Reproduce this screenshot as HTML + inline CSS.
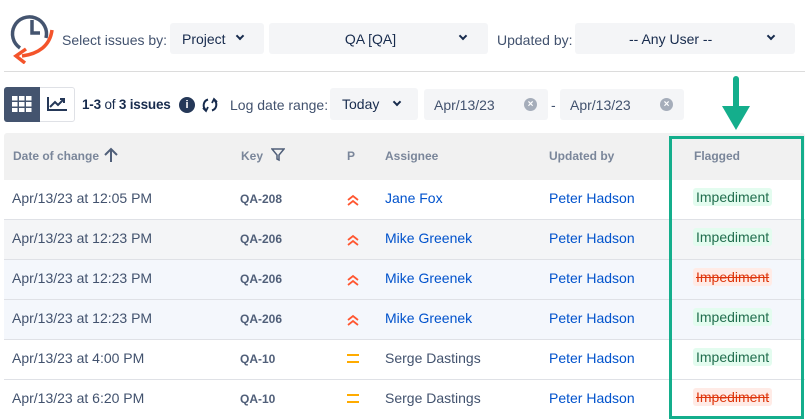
<!DOCTYPE html>
<html><head><meta charset="utf-8"><style>
*{box-sizing:border-box;margin:0;padding:0}
body{width:805px;height:419px;background:#fff;font-family:"Liberation Sans",sans-serif;position:relative;overflow:hidden;color:#42526e}
.a{position:absolute}
.box{position:absolute;background:#f4f5f7;border-radius:3px;font-size:14px;color:#172b4d;display:flex;align-items:center}
.chev{position:absolute;width:6px;height:6px;border-right:2px solid #172b4d;border-bottom:2px solid #172b4d;transform:rotate(45deg)}
.lbl{position:absolute;font-size:14px;color:#42526e}
.row{position:absolute;left:4px;width:801px;height:40px;border-bottom:1px solid #dfe1e6;font-size:14px}
.row span{position:absolute;top:10px}
.k{font-weight:bold;font-size:12px;color:#505f79;top:12px!important}
.blue{color:#0052cc}
.tag{padding:1px 3px;border-radius:3px;font-size:14px}
.g{background:#e3fcef;color:#216e4e}
.r{background:#ffebe6;color:#de350b;text-decoration:line-through}
.h{position:absolute;top:149px;font-size:12px;font-weight:bold;color:#7a869a}
.x{position:absolute;width:13px;height:13px;border-radius:50%;background:#a5adba;color:#fff;font-size:10px;line-height:13px;text-align:center;font-weight:bold}
.pr{position:absolute;left:342px;top:14px}
</style></head><body>
<svg class="a" style="left:6px;top:12px" width="48" height="52" viewBox="0 0 48 52">
<path d="M14 36 A17 17 0 1 1 40 26" fill="none" stroke="#44546f" stroke-width="3.5"/>
<path d="M26 8 V21 H34" fill="none" stroke="#44546f" stroke-width="3.5"/>
<path d="M46 18 C44 34 32 42 16 44" fill="none" stroke="#f4542b" stroke-width="3.5"/>
<path d="M20 37 L10 44 L19 51" fill="none" stroke="#f4542b" stroke-width="3.5"/>
</svg>
<div class="lbl" style="left:62px;top:32px">Select issues by:</div>
<div class="box" style="left:170px;top:23px;width:94px;height:31px;padding-left:12px">Project<i class="chev" style="left:67px;top:10px"></i></div>
<div class="box" style="left:269px;top:23px;width:219px;height:31px;justify-content:center;padding-right:16px">QA [QA]<i class="chev" style="left:191px;top:10px"></i></div>
<div class="lbl" style="left:497px;top:32px">Updated by:</div>
<div class="box" style="left:575px;top:23px;width:220px;height:31px;padding-left:54px">-- Any User --<i class="chev" style="left:193px;top:10px"></i></div>
<div class="a" style="left:4px;top:71px;width:801px;height:1px;background:#dcdcdc"></div>
<div class="a" style="left:4px;top:87px;width:71px;height:35px;border:1px solid #dfe1e6;border-radius:3px"></div>
<div class="a" style="left:4px;top:87px;width:36px;height:35px;background:#44546f;border-radius:3px 0 0 3px"></div>
<svg class="a" style="left:12px;top:96px" width="20" height="16"><g fill="#fff"><rect x="0" y="0" width="5.5" height="4.5"/><rect x="7" y="0" width="5.5" height="4.5"/><rect x="14" y="0" width="5.5" height="4.5"/><rect x="0" y="6" width="5.5" height="4.5"/><rect x="7" y="6" width="5.5" height="4.5"/><rect x="14" y="6" width="5.5" height="4.5"/><rect x="0" y="12" width="5.5" height="4"/><rect x="7" y="12" width="5.5" height="4"/><rect x="14" y="12" width="5.5" height="4"/></g></svg>
<svg class="a" style="left:46px;top:96px" width="22" height="16"><path d="M2 1 V14 H21 M4 11 L9 6 L12 9 L18 3 M14 3 H18 V7" fill="none" stroke="#253858" stroke-width="2"/></svg>
<div class="lbl" style="left:82px;top:97px;color:#172b4d;font-size:13.5px;letter-spacing:-0.2px"><b>1-3</b> of <b>3 issues</b></div>
<div class="a" style="left:179px;top:97px;width:16px;height:16px;border-radius:50%;background:#253858;color:#fff;font-size:11px;font-weight:bold;text-align:center;line-height:16px">i</div>
<svg class="a" style="left:202px;top:97px" width="16" height="16" viewBox="0 0 16 16"><path d="M6 2.5 A6 6 0 0 0 4 13 M10 13.5 A6 6 0 0 0 12 3" fill="none" stroke="#172b4d" stroke-width="2"/><path d="M1 11 L4 14 L6 10 M15 5 L12 2 L10 6" fill="none" stroke="#172b4d" stroke-width="1.8"/></svg>
<div class="lbl" style="left:230px;top:97px">Log date range:</div>
<div class="box" style="left:330px;top:88px;width:88px;height:32px;padding-left:12px">Today<i class="chev" style="left:64px;top:11px"></i></div>
<div class="box" style="left:424px;top:89px;width:124px;height:31px;padding-left:10px;color:#42526e">Apr/13/23<span class="x" style="left:100px;top:9px">×</span></div>
<div class="lbl" style="left:551px;top:97px">-</div>
<div class="box" style="left:560px;top:89px;width:124px;height:31px;padding-left:10px;color:#42526e">Apr/13/23<span class="x" style="left:100px;top:9px">×</span></div>
<div class="a" style="left:4px;top:133px;width:801px;height:47px;background:#f1f1f1;border-radius:3px 3px 0 0"></div>
<div class="h" style="left:13px">Date of change</div>
<svg class="a" style="left:104px;top:147px" width="14" height="16"><path d="M7 15 V2 M1 8 L7 2 L13 8" fill="none" stroke="#505f79" stroke-width="2"/></svg>
<div class="h" style="left:241px">Key</div>
<svg class="a" style="left:271px;top:148px" width="14" height="14"><path d="M1 1 H13 L8 7 V12 L6 11 V7 Z" fill="none" stroke="#505f79" stroke-width="1.5"/></svg>
<div class="h" style="left:347px">P</div>
<div class="h" style="left:385px">Assignee</div>
<div class="h" style="left:549px">Updated by</div>
<div class="h" style="left:694px">Flagged</div>

<div class="row" style="top:180px;background:#fff"><span style="left:8px">Apr/13/23 at 12:05 PM</span><span class="k" style="left:236px">QA-208</span><svg class="pr" width="14" height="12"><path d="M2 6 L7 2 L12 6 M2 11 L7 7 L12 11" fill="none" stroke="#ff5630" stroke-width="1.8"/></svg><span class="blue" style="left:381px">Jane Fox</span><span class="blue" style="left:545px">Peter Hadson</span><span class="tag g" style="left:689px;top:8px">Impediment</span></div>
<div class="row" style="top:220px;background:#f4f5f7"><span style="left:8px">Apr/13/23 at 12:23 PM</span><span class="k" style="left:236px">QA-206</span><svg class="pr" width="14" height="12"><path d="M2 6 L7 2 L12 6 M2 11 L7 7 L12 11" fill="none" stroke="#ff5630" stroke-width="1.8"/></svg><span class="blue" style="left:381px">Mike Greenek</span><span class="blue" style="left:545px">Peter Hadson</span><span class="tag g" style="left:689px;top:8px">Impediment</span></div>
<div class="row" style="top:260px;background:#f4f7fc"><span style="left:8px">Apr/13/23 at 12:23 PM</span><span class="k" style="left:236px">QA-206</span><svg class="pr" width="14" height="12"><path d="M2 6 L7 2 L12 6 M2 11 L7 7 L12 11" fill="none" stroke="#ff5630" stroke-width="1.8"/></svg><span class="blue" style="left:381px">Mike Greenek</span><span class="blue" style="left:545px">Peter Hadson</span><span class="tag r" style="left:689px;top:8px">Impediment</span></div>
<div class="row" style="top:300px;background:#f4f7fc"><span style="left:8px">Apr/13/23 at 12:23 PM</span><span class="k" style="left:236px">QA-206</span><svg class="pr" width="14" height="12"><path d="M2 6 L7 2 L12 6 M2 11 L7 7 L12 11" fill="none" stroke="#ff5630" stroke-width="1.8"/></svg><span class="blue" style="left:381px">Mike Greenek</span><span class="blue" style="left:545px">Peter Hadson</span><span class="tag g" style="left:689px;top:8px">Impediment</span></div>
<div class="row" style="top:340px;background:#fff"><span style="left:8px">Apr/13/23 at 4:00 PM</span><span class="k" style="left:236px">QA-10</span><span style="left:343px;top:14px;width:12px;height:9px;border-top:2px solid #ffab00;border-bottom:2px solid #ffab00"></span><span style="left:381px">Serge Dastings</span><span class="blue" style="left:545px">Peter Hadson</span><span class="tag g" style="left:689px;top:8px">Impediment</span></div>
<div class="row" style="top:380px;background:#fff;border:none"><span style="left:8px">Apr/13/23 at 6:20 PM</span><span class="k" style="left:236px">QA-10</span><span style="left:343px;top:14px;width:12px;height:9px;border-top:2px solid #ffab00;border-bottom:2px solid #ffab00"></span><span style="left:381px">Serge Dastings</span><span class="blue" style="left:545px">Peter Hadson</span><span class="tag r" style="left:689px;top:8px">Impediment</span></div>

<div class="a" style="left:669px;top:136px;width:135px;height:283px;border:3px solid #14ae8c"></div>
<svg class="a" style="left:720px;top:76px" width="32" height="60"><path d="M16 3 V35" stroke="#14ae8c" stroke-width="6" stroke-linecap="round"/><path d="M2 30 H30 L16 54 Z" fill="#14ae8c"/></svg>
</body></html>
